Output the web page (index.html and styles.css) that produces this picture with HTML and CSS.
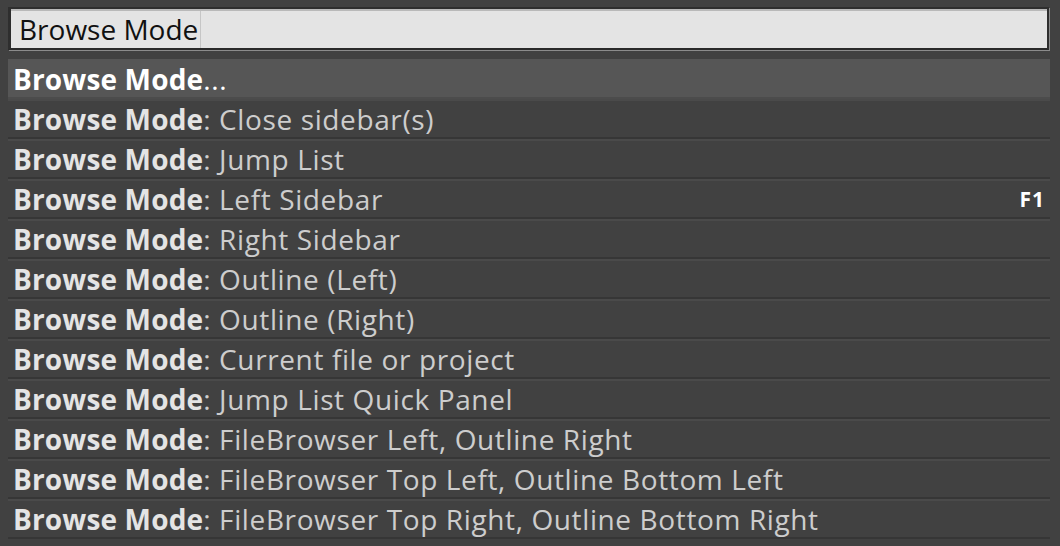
FILE: index.html
```html
<!DOCTYPE html>
<html>
<head>
<meta charset="utf-8">
<link rel="stylesheet" href="styles.css">
</head>
<body>
<div class="panel">
  <div class="input"><span class="query">Browse Mode</span><span class="caret"></span></div>
  <ul class="list">
    <li class="row selected"><span class="cmd"><b>Browse Mode</b>...</span></li>
    <li class="row"><span class="cmd"><b>Browse Mode</b>: Close sidebar(s)</span></li>
    <li class="row"><span class="cmd"><b>Browse Mode</b>: Jump List</span></li>
    <li class="row"><span class="cmd"><b>Browse Mode</b>: Left Sidebar</span><span class="key">F1</span></li>
    <li class="row"><span class="cmd"><b>Browse Mode</b>: Right Sidebar</span></li>
    <li class="row"><span class="cmd"><b>Browse Mode</b>: Outline (Left)</span></li>
    <li class="row"><span class="cmd"><b>Browse Mode</b>: Outline (Right)</span></li>
    <li class="row"><span class="cmd"><b>Browse Mode</b>: Current file or project</span></li>
    <li class="row"><span class="cmd"><b>Browse Mode</b>: Jump List Quick Panel</span></li>
    <li class="row"><span class="cmd"><b>Browse Mode</b>: FileBrowser Left, Outline Right</span></li>
    <li class="row"><span class="cmd"><b>Browse Mode</b>: FileBrowser Top Left, Outline Bottom Left</span></li>
    <li class="row"><span class="cmd"><b>Browse Mode</b>: FileBrowser Top Right, Outline Bottom Right</span></li>
  </ul>
</div>
</body>
</html>
```
FILE: styles.css
```css
html, body {
  margin: 0;
  padding: 0;
  background: #414141;
  width: 1060px;
  height: 546px;
  overflow: hidden;
  font-family: "Open Sans", "Noto Sans", sans-serif;
}

.panel {
  padding: 7px 10px 0 8px;
}

.input {
  height: 39px;
  background: #e4e4e4;
  border-top: 2px solid #2e2e2e;
  border-left: 3px solid #2e2e2e;
  border-right: 2px solid #2e2e2e;
  border-bottom: 2px solid #2a2a2a;
  box-shadow: inset 0 2px 0 #b9b9b9, 1px 1px 0 #8c8c8c;
  display: flex;
  align-items: center;
  padding-left: 8px;
  margin-right: 1px;
}

.query {
  font-size: 28px;
  color: #111;
  letter-spacing: 0;
}

.caret {
  align-self: stretch;
  width: 1px;
  margin: 2px 0 0 2px;
  background: #c6c6c6;
}

.list {
  list-style: none;
  margin: 9px 0 0 0;
  padding: 0;
}

.row {
  height: 36px;
  display: flex;
  align-items: center;
  justify-content: space-between;
  padding: 0 5px 0 5px;
  border-top: 2px solid #4a4a4a;
  border-bottom: 2px solid #363636;
  font-size: 28px;
  color: #cdcdcd;
  letter-spacing: 0.62px;
}

.row b {
  color: #e4e4e4;
  font-weight: 700;
  letter-spacing: 0.15px;
}

.row.selected {
  background: #565656;
  border-top-color: #565656;
  border-bottom-color: #4c4c4c;
  color: #fff;
}

.row.selected b {
  color: #fff;
}

.cmd {
  white-space: nowrap;
}

.key {
  font-size: 21px;
  font-weight: 700;
  color: #fff;
  letter-spacing: 1px;
}
```
